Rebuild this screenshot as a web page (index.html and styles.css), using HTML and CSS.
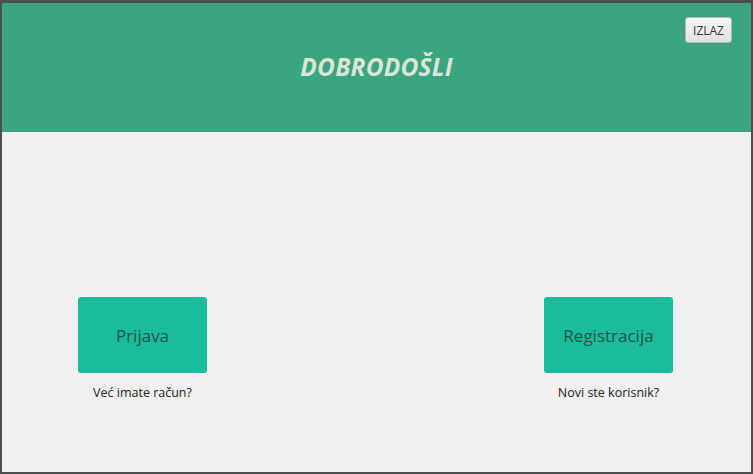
FILE: index.html
```html
<!DOCTYPE html>
<html lang="hr">
<head>
<meta charset="utf-8">
<title>Dobrodošli</title>
<link rel="stylesheet" href="styles.css">
</head>
<body>
<div class="window">
  <header class="header">
    <h1 class="title">DOBRODOŠLI</h1>
    <button class="exit">IZLAZ</button>
  </header>
  <main class="content">
    <div class="choice">
      <button class="action">Prijava</button>
      <p class="hint">Već imate račun?</p>
    </div>
    <div class="choice">
      <button class="action">Registracija</button>
      <p class="hint">Novi ste korisnik?</p>
    </div>
  </main>
</div>
</body>
</html>
```
FILE: styles.css
```css
* { box-sizing: border-box; }
html, body { margin: 0; padding: 0; }
body {
  width: 753px;
  height: 474px;
  font-family: "Open Sans", "Noto Sans", sans-serif;
  background: #4d4d4d;
}
.window {
  width: 753px;
  height: 474px;
  border: 2px solid #4d4d4d;
  border-top-width: 3px;
  background: #f0f0f0;
  display: flex;
  flex-direction: column;
}
.header {
  position: relative;
  height: 129px;
  background: #3aa57e;
  display: flex;
  align-items: center;
  justify-content: center;
}
.title {
  margin: 0;
  margin-top: -3px;
  font-size: 24.5px;
  font-weight: 700;
  font-style: italic;
  color: #dbe6d9;
  letter-spacing: 0.2px;
}
.exit {
  position: absolute;
  top: 14px;
  right: 19px;
  width: 47px;
  height: 26px;
  padding: 0;
  font-family: "Open Sans", sans-serif;
  font-size: 12px;
  color: #333;
  background: linear-gradient(#f6f6f6, #e2e2e2);
  border: 1px solid #b5b5b5;
  border-radius: 3px;
}
.content {
  flex: 1;
  display: flex;
  justify-content: space-between;
  padding: 165px 78px 0 76px;
}
.choice {
  width: 129px;
  display: flex;
  flex-direction: column;
  align-items: center;
}
.action {
  width: 129px;
  height: 76px;
  border: none;
  border-radius: 3px;
  background: #1abc9c;
  color: #225246;
  font-family: "Open Sans", sans-serif;
  font-size: 17px;
}
.hint {
  margin: 11px 0 0;
  font-size: 12.5px;
  color: #222;
  white-space: nowrap;
}
```
